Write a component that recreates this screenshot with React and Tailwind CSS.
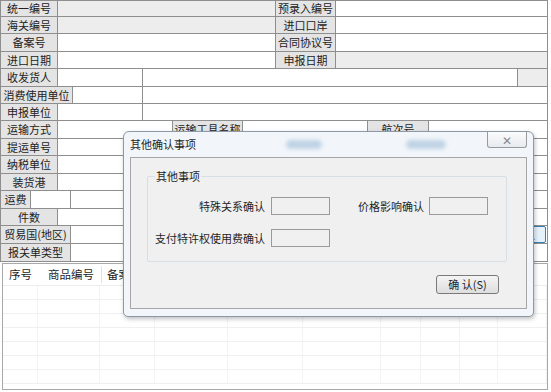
import React from "react";

function Label({ w, children }) {
  return (
    <div
      className={`${w} h-full shrink-0 bg-[#e4e4e4] border-r border-[#8e8e8e] flex items-center justify-center text-[11px] leading-none whitespace-nowrap text-[#222]`}
    >
      {children}
    </div>
  );
}

function Field({ w, gray }) {
  return (
    <div
      className={`${w || "flex-1"} h-full border-r border-[#8e8e8e] ${
        gray ? "bg-[#ededed]" : "bg-white"
      }`}
    />
  );
}

function Row({ h, children }) {
  return <div className={`${h} flex border-b border-[#8e8e8e]`}>{children}</div>;
}

const cols = ["w-[35px]", "w-[62px]", "w-[55px]", "w-[73px]", "w-[75px]", "w-[78px]", "w-[40px]", "w-[39px]", "w-[38px]", "flex-1"];

export default function App() {
  return (
    <div className="relative w-[551px] h-[392px] overflow-hidden bg-white font-['Noto_Sans_CJK_SC',sans-serif] text-[#1f1f1f]">
      {/* form grid */}
      <div className="w-[548px] border-l border-t border-[#8e8e8e]">
        <Row h="h-[16px]">
          <Label w="w-[57px]">统一编号</Label>
          <Field w="w-[218px]" gray />
          <Label w="w-[60px]">预录入编号</Label>
          <Field />
        </Row>
        <Row h="h-[17px]">
          <Label w="w-[57px]">海关编号</Label>
          <Field w="w-[218px]" gray />
          <Label w="w-[60px]">进口口岸</Label>
          <Field />
        </Row>
        <Row h="h-[18px]">
          <Label w="w-[57px]">备案号</Label>
          <Field w="w-[218px]" />
          <Label w="w-[60px]">合同协议号</Label>
          <Field />
        </Row>
        <Row h="h-[17px]">
          <Label w="w-[57px]">进口日期</Label>
          <Field w="w-[218px]" />
          <Label w="w-[60px]">申报日期</Label>
          <Field gray />
        </Row>
        <Row h="h-[18px]">
          <Label w="w-[57px]">收发货人</Label>
          <Field w="w-[85px]" />
          <Field w="w-[375px]" />
          <Field gray />
        </Row>
        <Row h="h-[17px]">
          <Label w="w-[72px]">消费使用单位</Label>
          <Field w="w-[70px]" />
          <Field />
        </Row>
        <Row h="h-[17px]">
          <Label w="w-[57px]">申报单位</Label>
          <Field w="w-[85px]" />
          <Field />
        </Row>
        <Row h="h-[18px]">
          <Label w="w-[57px]">运输方式</Label>
          <Field w="w-[115px]" />
          <Label w="w-[70px]">运输工具名称</Label>
          <Field w="w-[125px]" />
          <Label w="w-[61px]">航次号</Label>
          <Field />
        </Row>
        <Row h="h-[17px]">
          <Label w="w-[57px]">提运单号</Label>
          <Field w="w-[430px]" />
          <Field />
        </Row>
        <Row h="h-[18px]">
          <Label w="w-[57px]">纳税单位</Label>
          <Field w="w-[430px]" />
          <Field />
        </Row>
        <Row h="h-[17px]">
          <Label w="w-[57px]">装货港</Label>
          <Field w="w-[430px]" />
          <Field />
        </Row>
        <Row h="h-[18px]">
          <Label w="w-[30px]">运费</Label>
          <Field w="w-[40px]" />
          <Field w="w-[417px]" />
          <Field />
        </Row>
        <Row h="h-[17px]">
          <Label w="w-[57px]">件数</Label>
          <Field w="w-[430px]" />
          <Field />
        </Row>
        <div className="relative">
          <Row h="h-[18px]">
            <Label w="w-[70px]">贸易国(地区)</Label>
            <Field />
          </Row>
          <div className="absolute right-[2px] top-[0px] h-[17px] w-[44px] border border-[#3c7fb1] rounded-[2px] bg-[#e5f1fb] flex items-center justify-center text-[11px] leading-none">
            确认
          </div>
        </div>
        <Row h="h-[18px]">
          <Label w="w-[70px]">报关单类型</Label>
          <Field />
        </Row>
      </div>

      {/* goods list */}
      <div className="ml-[2px] mt-[1px] w-[546px] h-[127px] border border-[#a8a8a8] bg-white flex flex-col">
        <div className="h-[22px] flex items-center text-[11.5px] border-b border-[#ececec] shrink-0">
          <div className="w-[37px] pl-[6px]">序号</div>
          <div className="w-[62px] pl-[8px] border-r border-[#e2e2e2]">商品编号</div>
          <div className="pl-[5px]">备案号</div>
        </div>
        <div className="flex-1 flex flex-col">
          {Array.from({ length: 7 }).map((_, i) => (
            <div key={i} className="h-[14px] flex border-b border-[#f0f0f0]">
              {cols.map((c, j) => (
                <div key={j} className={`${c} h-full border-r border-[#f3f3f3]`} />
              ))}
            </div>
          ))}
        </div>
      </div>

      {/* dialog */}
      <div className="absolute left-[123px] top-[131px] w-[411px] h-[186px] rounded-t-[6px] rounded-b-[5px] border border-[#8d99a6] bg-[#f2f6fa] shadow-[1px_2px_4px_rgba(0,0,0,0.25)] flex flex-col">
        <div className="relative h-[25px] shrink-0 flex items-center pl-[6px] text-[11px] leading-none">
          其他确认事项
          <div className="absolute left-[162px] top-[8px] w-[36px] h-[9px] rounded-full bg-[#a9c4dc] blur-[2px] opacity-70" />
          <div className="absolute left-[282px] top-[8px] w-[40px] h-[9px] rounded-full bg-[#a9c4dc] blur-[2px] opacity-70" />
          <div className="absolute right-[6px] top-[0px] w-[40px] h-[16px] border border-t-0 border-[#9a9a9a] rounded-b-[3px] bg-[linear-gradient(#fbfbfb,#e6ebf0)] flex items-center justify-center text-[12px] leading-none text-[#8a8a8a]">
            ✕
          </div>
        </div>
        <div className="mx-[6px] h-[152px] border border-[#a6a6a6] bg-[#f0f0f0] pt-[18px] pl-[16px] flex flex-col">
          <div className="relative w-[360px] h-[86px] border border-[#d5dfe5] rounded-[2px] pt-[20px] flex flex-col gap-[14px]">
            <div className="absolute left-[7px] top-[-9px] bg-[#f0f0f0] px-[1px] text-[11px] leading-[16px]">
              其他事项
            </div>
            <div className="flex items-center text-[11px] leading-none">
              <div className="w-[117px] text-right">特殊关系确认</div>
              <div className="ml-[6px] w-[59px] h-[18px] border border-[#9a9a9a] bg-[#f0f0f0]" />
              <div className="ml-[28px] w-[71px]">价格影响确认</div>
              <div className="w-[59px] h-[18px] border border-[#9a9a9a] bg-[#f0f0f0]" />
            </div>
            <div className="flex items-center text-[11px] leading-none">
              <div className="w-[117px] text-right">支付特许权使用费确认</div>
              <div className="ml-[6px] w-[59px] h-[18px] border border-[#9a9a9a] bg-[#f0f0f0]" />
            </div>
          </div>
          <div className="mt-[13px] pr-[27px] flex justify-end">
            <div className="w-[63px] h-[19px] border border-[#7a7a7a] rounded-[3px] bg-[linear-gradient(#f4f4f4,#dedede)] flex items-center justify-center text-[11px] leading-none">
              确 认(S)
            </div>
          </div>
        </div>
      </div>
    </div>
  );
}
